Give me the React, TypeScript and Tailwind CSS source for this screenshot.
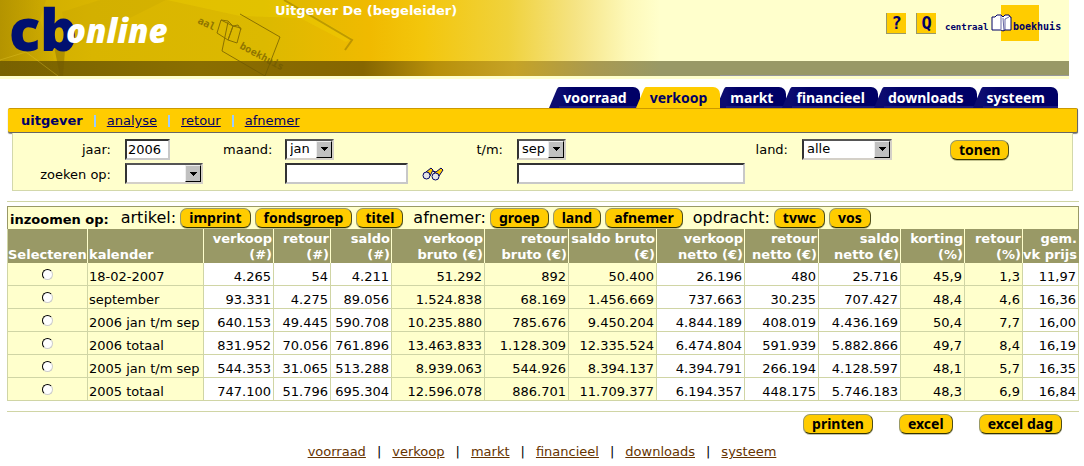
import type { ReactNode } from "react";
import clsx from "clsx";

const sections = ["voorraad", "verkoop", "markt", "financieel", "downloads", "systeem"];

const zoomGroups = [
  { label: "artikel:", buttons: ["imprint", "fondsgroep", "titel"] },
  { label: "afnemer:", buttons: ["groep", "land", "afnemer"] },
  { label: "opdracht:", buttons: ["tvwc", "vos"] },
];

const columns = [
  { title: ["verkoop", "(#)"], width: "w-[70px]", tinted: false },
  { title: ["retour", "(#)"], width: "w-[57px]", tinted: false },
  { title: ["saldo", "(#)"], width: "w-[61px]", tinted: false },
  { title: ["verkoop", "bruto (€)"], width: "w-[93px]", tinted: true },
  { title: ["retour", "bruto (€)"], width: "w-[84px]", tinted: true },
  { title: ["saldo bruto", "(€)"], width: "w-[88px]", tinted: true },
  { title: ["verkoop", "netto (€)"], width: "w-[88px]", tinted: false },
  { title: ["retour", "netto (€)"], width: "w-[74px]", tinted: false },
  { title: ["saldo", "netto (€)"], width: "w-[82px]", tinted: false },
  { title: ["korting", "(%)"], width: "w-[64px]", tinted: true },
  { title: ["retour", "(%)"], width: "w-[58px]", tinted: true },
  { title: ["gem.", "vk prijs"], width: "w-[56px]", tinted: false },
];

const rows = [
  { name: "18-02-2007", values: ["4.265", "54", "4.211", "51.292", "892", "50.400", "26.196", "480", "25.716", "45,9", "1,3", "11,97"] },
  { name: "september", values: ["93.331", "4.275", "89.056", "1.524.838", "68.169", "1.456.669", "737.663", "30.235", "707.427", "48,4", "4,6", "16,36"] },
  { name: "2006 jan t/m sep", values: ["640.153", "49.445", "590.708", "10.235.880", "785.676", "9.450.204", "4.844.189", "408.019", "4.436.169", "50,4", "7,7", "16,00"] },
  { name: "2006 totaal", values: ["831.952", "70.056", "761.896", "13.463.833", "1.128.309", "12.335.524", "6.474.804", "591.939", "5.882.866", "49,7", "8,4", "16,19"] },
  { name: "2005 jan t/m sep", values: ["544.353", "31.065", "513.288", "8.939.063", "544.926", "8.394.137", "4.394.791", "266.194", "4.128.597", "48,1", "5,7", "16,35"] },
  { name: "2005 totaal", values: ["747.100", "51.796", "695.304", "12.596.078", "886.701", "11.709.377", "6.194.357", "448.175", "5.746.183", "48,3", "6,9", "16,84"] },
];

function PillButton({ children }: { children: ReactNode }) {
  return (
    <button
      type="button"
      className="h-5 rounded-[7px] border border-t-[#999966] border-l-[#999966] border-r-[#4d4d1a] border-b-[#333300] bg-[#ffcc00] px-2 font-['Noto_Sans',sans-serif] text-[14px] leading-[18px] font-bold whitespace-nowrap text-black shadow-[0_1px_0_#66663366]"
    >
      {children}
    </button>
  );
}

function SelectBox({ id, options, className }: { id: string; options: string[]; className: string }) {
  return (
    <span className={clsx("relative block h-[21px]", className)}>
      <select
        id={id}
        className="block h-full w-full appearance-none rounded-none border-2 border-t-[#555555] border-l-[#333333] border-r-[#d4d0c8] border-b-[#d4d0c8] bg-white pl-[3px] text-[13px] leading-4 text-black"
      >
        {options.map((option) => (
          <option key={option}>{option}</option>
        ))}
      </select>
      <span className="pointer-events-none absolute top-0.5 right-0.5 bottom-0.5 flex w-4 items-center justify-center border border-t-[#eeeeee] border-l-[#eeeeee] border-r-black border-b-black bg-[#c0c0c0]">
        <svg width="7" height="4" viewBox="0 0 7 4" shapeRendering="crispEdges">
          <path d="M0 0h7v1H0zM1 1h5v1H1zM2 2h3v1H2zM3 3h1v1H3z" />
        </svg>
      </span>
    </span>
  );
}

const textBox =
  "block h-[21px] rounded-none border-2 border-t-[#333333] border-l-[#333333] border-r-[#c8c8c8] border-b-[#c8c8c8] bg-white px-px text-[13px] leading-4 text-black";

function BannerArt() {
  return (
    <svg className="absolute top-0 left-0" width="720" height="76" viewBox="0 0 720 76">
      <defs>
        <linearGradient id="gold" gradientUnits="userSpaceOnUse" x1="0" y1="0" x2="660" y2="0">
          <stop offset="0" stopColor="#cdaa00" />
          <stop offset="0.14" stopColor="#d9b500" />
          <stop offset="0.4" stopColor="#dcb900" />
          <stop offset="0.56" stopColor="#f0ba00" />
          <stop offset="0.64" stopColor="#f3c60c" />
          <stop offset="0.77" stopColor="#f0d23c" />
          <stop offset="0.87" stopColor="#f5e382" />
          <stop offset="0.95" stopColor="#fdf8b8" />
          <stop offset="1" stopColor="#ffffcc" />
        </linearGradient>
        <linearGradient id="strip" gradientUnits="userSpaceOnUse" x1="0" y1="0" x2="660" y2="0">
          <stop offset="0" stopColor="#786200" />
          <stop offset="0.3" stopColor="#8a6e00" />
          <stop offset="0.55" stopColor="#866600" />
          <stop offset="0.66" stopColor="#b8900a" />
          <stop offset="0.78" stopColor="#c6a326" />
          <stop offset="0.9" stopColor="#a99a50" />
          <stop offset="1" stopColor="#999966" />
        </linearGradient>
        <linearGradient id="shade" x1="0" y1="0" x2="1" y2="0">
          <stop offset="0" stopColor="#7a6000" stopOpacity="0.3" />
          <stop offset="1" stopColor="#7a6000" stopOpacity="0" />
        </linearGradient>
      </defs>
      <rect width="720" height="61" fill="url(#gold)" />
      <rect y="61" width="720" height="15" fill="url(#strip)" />
      <path d="M0 0h46L40 20 60 76H10L0 60z" fill="url(#shade)" />
      <path d="M62 12 100 0h66L70 48z" fill="#a58500" opacity="0.1" />
      <path d="M54 46 60 76H63L65 50z" fill="#6e5500" opacity="0.35" />
      <path d="M0 60 26 52 58 76" stroke="#e8cc30" strokeWidth="1" fill="none" opacity="0.35" />
      <path d="M167 0 240 16 300 18 346 42 352 38 286 0z" fill="#f2d800" opacity="0.3" />
      <path d="M284 0 352 40 345 50" stroke="#8f7200" strokeWidth="2" fill="none" opacity="0.5" />
      <g stroke="#6f5900" fill="none" opacity="0.75">
        <path d="M240 14 280 37 265 76 222 51 228 22" />
        <path d="M221 20 233 26 228 40 217 33z" />
        <path d="M233 26 241 28 237 43 228 40z" />
        <path d="M221 20 228 21 233 26 238 25 241 30" />
      </g>
      <g fill="#6f5900" opacity="0.7" className="font-['DejaVu_Sans_Mono',monospace] text-[10px] font-bold">
        <text x="197" y="23" transform="rotate(25 197 23)">aal</text>
        <text x="239" y="48" transform="rotate(28 239 48)">boekhuis</text>
      </g>
      <g fill="#001070" className="font-['Open_Sans',sans-serif] text-[58px] font-extrabold">
        <text x="9" y="51">c</text>
        <text x="40" y="51">b</text>
      </g>
      <text x="66" y="43" fill="#ffffff" className="font-['Open_Sans',sans-serif] text-[33px] font-extrabold italic">
        online
      </text>
    </svg>
  );
}

function CentraalBoekhuisLogo() {
  return (
    <svg width="122" height="42" viewBox="0 0 122 42">
      <rect x="58" y="5" width="38" height="36" fill="#ffcc00" />
      <g fill="#000066" className="font-['DejaVu_Sans_Mono',monospace] font-bold">
        <text x="2" y="30" className="text-[9px]">centraal</text>
        <text x="70" y="30" className="text-[10px]">boekhuis</text>
      </g>
      <path d="M49 17h3l2-2h4l2 2 2-2h4l1 2h1v13h-6l-2 1-2-1h-9z" fill="#ffffff" stroke="#000066" />
      <path d="M58 16v13M60 18l1 13M66 17l-4 2v11" stroke="#000066" strokeWidth="0.6" fill="none" />
    </svg>
  );
}

function Binoculars() {
  return (
    <svg width="22" height="14" viewBox="0 0 22 14">
      <path d="M4 5 9 1l2 2-3 6zM11 4l3 1 5-4 2 2-4 6z" fill="#ffcc00" stroke="#000066" />
      <circle cx="4.500" cy="8.500" r="3.500" fill="#e6e6e6" stroke="#000066" />
      <circle cx="13.500" cy="9.500" r="3.500" fill="#e6e6e6" stroke="#000066" />
    </svg>
  );
}

function HeaderButton({ label, children }: { label: string; children: ReactNode }) {
  return (
    <button
      type="button"
      aria-label={label}
      className="flex h-[21px] w-5 items-center justify-center border-b border-l border-[#999966] bg-[#ffcc00] font-['DejaVu_Sans_Mono',monospace] text-[17px] leading-5 font-bold text-[#000066]"
    >
      {children}
    </button>
  );
}

function Header() {
  return (
    <header className="relative mr-[15px] bg-[#ffffcc] pb-[3px]">
      <div className="flex h-[61px] items-start justify-end gap-[7px] pr-[4px]">
        <div className="mt-[13px] flex gap-[10px]">
          <HeaderButton label="Help">?</HeaderButton>
          <HeaderButton label="Zoeken">Q</HeaderButton>
        </div>
        <CentraalBoekhuisLogo />
      </div>
      <div className="h-[15px] border-b border-[#999999] bg-[#999966]" />
      <BannerArt />
      <h1 className="absolute top-[3px] left-[275px] text-[13px] leading-4 font-bold text-white">
        Uitgever De (begeleider)
      </h1>
    </header>
  );
}

function Tabs() {
  return (
    <nav className="mt-2 mr-[26px] flex justify-end">
      {sections.map((section) => {
        const active = section === "verkoop";
        return (
          <a
            key={section}
            href={`#${section}`}
            className={clsx("-ml-1 flex h-[21px]", active ? "relative z-10 text-[#000066]" : "text-white")}
          >
            <svg width="10" height="21" viewBox="0 0 10 21">
              <path d="M0 21 8 2Q9 0 10 0V21z" fill={active ? "#ffcc00" : "#0c0c70"} />
            </svg>
            <span
              className={clsx(
                "rounded-tr-[7px] pr-[13px] pl-1 font-['Noto_Sans',sans-serif] text-[14px] leading-[22px] font-bold",
                active ? "bg-[#ffcc00]" : "border-b-2 border-[#1a1a80] bg-linear-to-r from-[#0c0c70] to-[#000066] to-20%",
              )}
            >
              {section}
            </span>
          </a>
        );
      })}
    </nav>
  );
}

function SubNav() {
  return (
    <nav className="mr-[6px] ml-2 flex h-[25px] items-center gap-[11px] rounded-[2px] border-t border-r border-b border-t-[#cc9900] border-r-[#666666] border-b-[#666666] bg-[#ffcc00] pt-px pl-[13px] text-[13px] leading-4 text-[#000066] shadow-[0_1px_1px_#888888]">
      <span className="font-bold">uitgever</span>
      {["analyse", "retour", "afnemer"].map((item) => (
        <span key={item} className="flex items-center gap-[11px]">
          <span className="h-3 w-0.5 bg-[#99ccff]" />
          <a href={`#${item}`} className="underline">
            {item}
          </a>
        </span>
      ))}
    </nav>
  );
}

function FilterForm() {
  return (
    <form className="mr-[11px] ml-3 grid grid-cols-[98px_84px_48px_123px_81px_228px_29px_90px_1fr] items-center gap-x-3.5 gap-y-[3px] border border-t-0 border-[#d3d8ab] bg-[#ffffcc] pt-[5px] pb-[6px] text-[13px] leading-4">
      <label htmlFor="jaar" className="pt-0.5 text-right">jaar:</label>
      <input id="jaar" defaultValue="2006" className={clsx(textBox, "w-[45px]")} />
      <label htmlFor="maand" className="pt-0.5 text-right">maand:</label>
      <SelectBox id="maand" options={["jan"]} className="w-[49px]" />
      <label htmlFor="tm" className="pt-0.5 text-right">t/m:</label>
      <SelectBox id="tm" options={["sep"]} className="w-[49px]" />
      <label htmlFor="land" className="flex justify-end pt-0.5">land:</label>
      <SelectBox id="land" options={["alle"]} className="w-[90px]" />
      <div className="flex pt-0.5 pl-[44px]">
        <PillButton>tonen</PillButton>
      </div>

      <label htmlFor="zoeken" className="pt-0.5 text-right whitespace-nowrap">zoeken op:</label>
      <SelectBox id="zoeken" options={[""]} className="w-[78px]" />
      <input aria-label="zoekterm" className={clsx(textBox, "col-start-4 w-full")} />
      <button type="button" aria-label="zoeken" className="justify-self-start">
        <Binoculars />
      </button>
      <input aria-label="resultaat" className={clsx(textBox, "w-full")} />
    </form>
  );
}

function ZoomBar() {
  return (
    <div className="flex h-[23px] items-center border border-b-0 border-[#999966] bg-[#ffffcc] pl-[2px]">
      <span className="mr-1 pt-1 text-[13px] leading-4 font-bold">inzoomen op:</span>
      {zoomGroups.map((group) => (
        <div key={group.label} className="mr-0.5 ml-2 flex items-center gap-1">
          <span className="text-[16px] leading-5">{group.label}</span>
          {group.buttons.map((button) => (
            <PillButton key={button}>{button}</PillButton>
          ))}
        </div>
      ))}
    </div>
  );
}

function SalesTable() {
  return (
    <table className="w-full table-fixed border-separate border-spacing-0 border-l border-[#d0d5a5] text-[13px] leading-4">
      <thead>
        <tr className="bg-[#999966] align-bottom whitespace-nowrap text-white">
          <th className="w-[80px] border-r border-[#ffffcc] text-left">Selecteren</th>
          <th className="w-[116px] border-r border-[#ffffcc] pl-px text-left">kalender</th>
          {columns.map((column) => (
            <th
              key={column.title.join(" ")}
              className={clsx(column.width, "border-r border-[#ffffcc] pt-[2px] pr-px text-right last:border-[#999966]")}
            >
              {column.title[0]}
              <br />
              {column.title[1]}
            </th>
          ))}
        </tr>
      </thead>
      <tbody>
        {rows.map((row) => (
          <tr key={row.name} className="h-[23px] whitespace-nowrap">
            <td className="border-r border-b border-[#d0d5a5] bg-[#ffffcc]">
              <input
                type="radio"
                name="periode"
                aria-label={row.name}
                className="mx-auto block h-[11px] w-[11px] appearance-none rounded-full border border-t-black border-l-black border-r-[#cccccc] border-b-[#cccccc] bg-white"
              />
            </td>
            <td className="border-r border-b border-[#d0d5a5] bg-[#ffffcc] pt-[5px] pl-px">{row.name}</td>
            {row.values.map((value, i) => (
              <td
                key={i}
                className={clsx("border-r border-b border-[#d0d5a5] pt-[5px] pr-[2px] text-right", columns[i].tinted && "bg-[#ffffcc]")}
              >
                {value}
              </td>
            ))}
          </tr>
        ))}
      </tbody>
    </table>
  );
}

export default function App() {
  return (
    <div className="bg-white pb-1 font-['DejaVu_Sans',sans-serif] text-black">
      <Header />
      <Tabs />
      <SubNav />
      <FilterForm />
      <main className="mt-[10px] mr-[5px] ml-[7px] border-t border-[#d0d5a5] pt-1">
        <ZoomBar />
        <SalesTable />
        <div className="mt-[10px] flex justify-end gap-[26px] border-t border-[#d0d5a5] pt-0.5 pr-[17px]">
          <PillButton>printen</PillButton>
          <PillButton>excel</PillButton>
          <PillButton>excel dag</PillButton>
        </div>
      </main>
      <footer className="mt-2.5 flex justify-center gap-[11px] text-[13px] leading-4">
        {sections.map((section, i) => (
          <span key={section} className="flex gap-[11px]">
            {i > 0 && <span>|</span>}
            <a href={`#${section}`} className="text-[#663300] underline">
              {section}
            </a>
          </span>
        ))}
      </footer>
    </div>
  );
}
